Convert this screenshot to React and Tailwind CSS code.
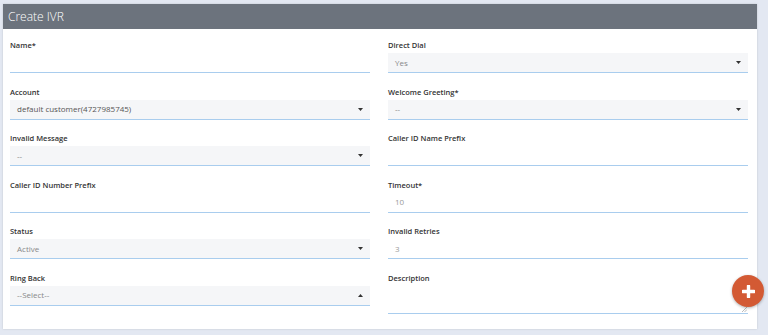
import React from 'react';

const Caret = ({ up }) => (
  <svg width="5" height="3" viewBox="0 0 5 3" className="shrink-0">
    {up ? <path d="M0 3 L2.5 0 L5 3 Z" fill="#333" /> : <path d="M0 0 L5 0 L2.5 3 Z" fill="#333" />}
  </svg>
);

function Field({ label, children }) {
  return (
    <div className="flex flex-col">
      <label className="h-[10px] mb-[3px] text-[7.5px] leading-[10px] font-semibold text-[#333]">{label}</label>
      {children}
    </div>
  );
}

function TextInput({ value }) {
  return (
    <div className="h-[20px] border-b border-[#a9cdee] px-[7px] flex items-center text-[8px] text-[#9a9a9a]">
      {value}
    </div>
  );
}

function Select({ value, up, dark }) {
  return (
    <div className="h-[20px] bg-[#f5f6f8] border-b border-[#a9cdee] pl-[7px] pr-[7px] flex items-center justify-between text-[8px]">
      <span className={dark ? 'text-[#555]' : 'text-[#888]'}>{value}</span>
      <Caret up={up} />
    </div>
  );
}

export default function App() {
  return (
    <div className="w-[768px] h-[335px] bg-[#e3e8f2] pt-[4px] pl-[3px] overflow-hidden relative" style={{ fontFamily: '"Open Sans", sans-serif' }}>
      <div className="w-[754px] h-[325px] bg-white shadow-[0_0_2px_rgba(0,0,0,0.15)] flex flex-col">
        <div className="h-[25px] bg-[#6c737d] flex items-center px-[5px] text-white text-[12px] font-light">
          Create IVR
        </div>
        <div className="pt-[11px] pl-[7px] pr-[9px] grid grid-cols-[360px_360px] gap-x-[18px]">
          <div className="flex flex-col gap-y-[13.5px]">
            <Field label="Name*"><TextInput value="" /></Field>
            <Field label="Account"><Select value="default customer(4727985745)" dark /></Field>
            <Field label="Invalid Message"><Select value="--" /></Field>
            <Field label="Caller ID Number Prefix"><TextInput value="" /></Field>
            <Field label="Status"><Select value="Active" /></Field>
            <Field label="Ring Back"><Select value="--Select--" up /></Field>
          </div>
          <div className="flex flex-col gap-y-[13.5px]">
            <Field label="Direct Dial"><Select value="Yes" /></Field>
            <Field label="Welcome Greeting*"><Select value="--" /></Field>
            <Field label="Caller ID Name Prefix"><TextInput value="" /></Field>
            <Field label="Timeout*"><TextInput value="10" /></Field>
            <Field label="Invalid Retries"><TextInput value="3" /></Field>
            <Field label="Description">
              <div className="h-[28px] border-b border-[#a9cdee] relative">
                <svg width="6" height="6" viewBox="0 0 6 6" className="absolute right-[1px] bottom-[1px]">
                  <path d="M1 6 L6 1 M3.5 6 L6 3.5" stroke="#aaa" strokeWidth="0.8" />
                </svg>
              </div>
            </Field>
          </div>
        </div>
      </div>
      <button className="absolute left-[732px] top-[275px] w-[32px] h-[32px] rounded-full bg-[#d35a34] shadow-[0_1px_3px_rgba(0,0,0,0.3)] flex items-center justify-center">
        <svg width="13" height="13" viewBox="0 0 13 13">
          <path d="M6.5 1 V12 M1 6.5 H12" stroke="#fff" strokeWidth="3.4" strokeLinecap="round" />
        </svg>
      </button>
    </div>
  );
}
